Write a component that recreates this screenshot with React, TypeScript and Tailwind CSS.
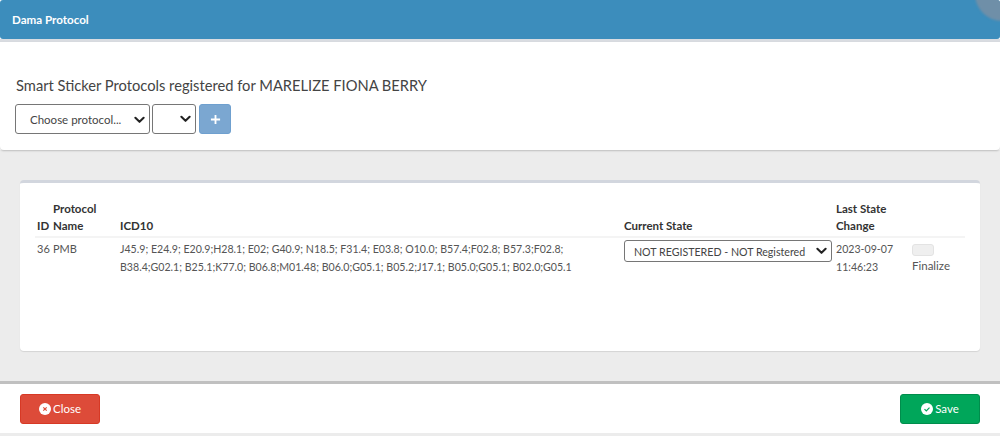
import React from "react";

const Chevron = ({ className }: { className?: string }) => (
  <svg viewBox="0 0 12 8" className={className} fill="none" stroke="#222" strokeWidth="2.2" strokeLinecap="round" strokeLinejoin="round">
    <path d="M1.5 1.5 6 6l4.5-4.5" />
  </svg>
);

const Select = ({ label, className, textClass }: { label: string; className: string; textClass: string }) => (
  <div className={`flex items-center justify-between rounded-[3px] border border-[#767676] bg-white ${className}`}>
    <span className={`whitespace-nowrap text-[#444] ${textClass}`}>{label}</span>
    <Chevron className="h-[8px] w-[11px] shrink-0" />
  </div>
);

export default function App() {
  return (
    <div className="flex h-[436px] w-[1000px] flex-col overflow-hidden bg-white text-[#333] [font-family:Lato,'Liberation_Sans',sans-serif]">
      <header className="relative flex h-[39px] shrink-0 items-center overflow-hidden rounded-[3px] bg-[#3c8dbc] pl-[12px]">
        <h1 className="text-[11.6px] font-bold text-white">Dama Protocol</h1>
        <div className="absolute right-[-29px] top-[-33px] h-[54px] w-[54px] rounded-full bg-[#6f8fa8] blur-[1px]" />
      </header>
      <div className="h-[3px] shrink-0 bg-[#d9dce1]" />

      <section className="z-10 flex h-[108px] shrink-0 flex-col rounded-b-[4px] bg-white pl-[15px] pt-[33px] shadow-[0_1px_2px_rgba(0,0,0,0.2)]">
        <p className="pl-[1px] text-[14.7px] leading-[20px] text-[#444]">Smart Sticker Protocols registered for MARELIZE FIONA BERRY</p>
        <div className="mt-[9px] flex items-center gap-[2px]">
          <Select label="Choose protocol..." className="h-[30px] w-[135px] pl-[14px] pr-[4px] pt-[1px]" textClass="text-[11.5px]" />
          <Select label="" className="h-[30px] w-[44px] pr-[4px]" textClass="text-[11.5px]" />
          <button className="ml-[1px] flex h-[30px] w-[32px] items-center justify-center rounded-[3px] border border-[#6fa0cf] bg-[#7ba7d1]">
            <svg viewBox="0 0 12 12" className="h-[11px] w-[11px]" stroke="white" strokeWidth="2">
              <path d="M6 1v10M1 6h10" />
            </svg>
          </button>
        </div>
      </section>

      <main className="flex h-[231px] shrink-0 flex-col bg-[#ececec] px-[20px] pb-[30px] pt-[30px]">
        <div className="h-full rounded-[4px] border-t-[3px] border-[#d2d6de] bg-white px-[15px] pt-[17px] shadow-[0_1px_1px_rgba(0,0,0,0.1)]">
          <table className="w-[930px] table-fixed border-collapse text-[11.5px] leading-[17px]">
            <colgroup>
              <col className="w-[16px]" />
              <col className="w-[67px]" />
              <col className="w-[504px]" />
              <col className="w-[212px]" />
              <col className="w-[78px]" />
              <col />
            </colgroup>
            <thead>
              <tr className="border-b-[2px] border-[#f4f4f4] text-left align-bottom font-bold text-[#333]">
                <th className="whitespace-nowrap px-[2px] pb-[2px]">ID</th>
                <th className="px-[2px] pb-[2px]">Protocol Name</th>
                <th className="px-[2px] pb-[2px]">ICD10</th>
                <th className="px-[2px] pb-[2px]">Current State</th>
                <th className="px-[2px] pb-[2px]">Last State Change</th>
                <th className="pb-[2px]" />
              </tr>
            </thead>
            <tbody>
              <tr className="align-top text-[#555]">
                <td className="whitespace-nowrap px-[2px] pt-[2px] text-[11px] leading-[18px]">36</td>
                <td className="px-[2px] pt-[2px] text-[11px] leading-[18px]">PMB</td>
                <td className="whitespace-nowrap px-[2px] pt-[2px] text-[10.6px] leading-[18px]">
                  J45.9; E24.9; E20.9;H28.1; E02; G40.9; N18.5; F31.4; E03.8; O10.0; B57.4;F02.8; B57.3;F02.8;
                  <br />
                  B38.4;G02.1; B25.1;K77.0; B06.8;M01.48; B06.0;G05.1; B05.2;J17.1; B05.0;G05.1; B02.0;G05.1
                </td>
                <td className="px-[2px] pt-[2px]">
                  <Select label="NOT REGISTERED - NOT Registered" className="h-[22px] w-[208px] pl-[9px] pr-[4px]" textClass="text-[10.65px]" />
                </td>
                <td className="px-[2px] pt-[2px] text-[10.6px] leading-[18px]">
                  2023-09-07
                  <br />
                  11:46:23
                </td>
                <td className="pt-[6px]">
                  <div className="h-[12px] w-[22px] rounded-[3px] border border-[#e3e3e3] bg-[#efefef]" />
                  <div className="mt-[1px]">Finalize</div>
                </td>
              </tr>
            </tbody>
          </table>
        </div>
      </main>

      <div className="h-[3px] shrink-0 bg-[#c0c0c0]" />
      <footer className="flex h-[49px] shrink-0 items-center justify-between bg-white px-[20px]">
        <button className="flex h-[30px] w-[80px] items-center justify-center gap-[2px] rounded-[3px] border border-[#d73925] bg-[#dd4b39] text-[11.5px] text-white">
          <svg viewBox="0 0 12 12" className="h-[12px] w-[12px]">
            <circle cx="6" cy="6" r="6" fill="white" />
            <path d="M4.3 4.3l3.4 3.4M7.7 4.3 4.3 7.7" stroke="#dd4b39" strokeWidth="1.2" />
          </svg>
          Close
        </button>
        <button className="flex h-[30px] w-[80px] items-center justify-center gap-[2px] rounded-[3px] border border-[#008d4c] bg-[#00a65a] text-[11.5px] text-white">
          <svg viewBox="0 0 12 12" className="h-[12px] w-[12px]">
            <circle cx="6" cy="6" r="6" fill="white" />
            <path d="M3.5 6.2 5.3 8l3.2-3.4" fill="none" stroke="#00a65a" strokeWidth="1.2" />
          </svg>
          Save
        </button>
      </footer>
      <div className="h-[3px] shrink-0 bg-[#ececec]" />
    </div>
  );
}
